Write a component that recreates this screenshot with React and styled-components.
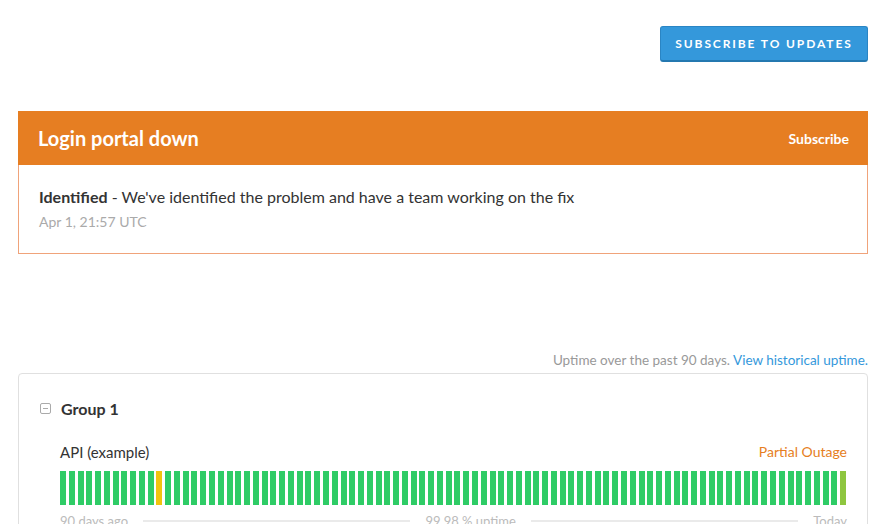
import React from 'react'
import styled, { createGlobalStyle } from 'styled-components'

const GlobalStyle = createGlobalStyle`
  body {
    margin: 0;
    background: #fff;
    font-family: Lato, "Open Sans", sans-serif;
    color: #333;
  }
`

const Page = styled.div`
  width: 850px;
  margin: 0 auto;
  padding: 26px 0 0;
  box-sizing: border-box;
`

const TopBar = styled.div`
  display: flex;
  justify-content: flex-end;
`

const SubscribeButton = styled.button`
  width: 208px;
  height: 36px;
  background: #3498db;
  border: 1px solid #2a85c4;
  border-bottom: 2px solid #2478b0;
  border-radius: 3px;
  color: #fff;
  font-family: Lato, sans-serif;
  font-weight: 700;
  font-size: 12px;
  letter-spacing: 1.9px;
  text-transform: uppercase;
`

const Incident = styled.div`
  margin-top: 49px;
  border: 1px solid #f0a37a;
  border-top: none;
`

const IncidentHead = styled.div`
  background: #e67e22;
  height: 54px;
  display: flex;
  align-items: center;
  justify-content: space-between;
  padding: 0 19px 0 20px;
  color: #fff;
  margin: 0 -1px;
`

const IncidentTitle = styled.h2`
  margin: 0;
  font-size: 20px;
  font-weight: 700;
`

const HeadLink = styled.span`
  font-size: 14px;
  font-weight: 700;
`

const IncidentBody = styled.div`
  padding: 22px 20px 0;
  height: 88px;
  box-sizing: border-box;
`

const Update = styled.div`
  font-size: 16px;
  color: #333;
  b { font-weight: 700; }
`

const Stamp = styled.div`
  margin-top: 7px;
  font-size: 14px;
  color: #aaa;
`

const UptimeNote = styled.div`
  margin-top: 98px;
  text-align: right;
  font-size: 13.5px;
  color: #999;
  a { color: #3498db; text-decoration: none; }
`

const Card = styled.div`
  margin-top: 5px;
  border: 1px solid #e0e0e0;
  border-radius: 4px;
  padding: 25px 20px 0 21px;
  height: 160px;
  box-sizing: border-box;
  overflow: hidden;
`

const GroupRow = styled.div`
  display: flex;
  align-items: center;
  gap: 10px;
  font-size: 16px;
  font-weight: 700;
  color: #333;
`

const Toggle = styled.span`
  width: 9px;
  height: 9px;
  border: 1px solid #aaa;
  border-radius: 2px;
  position: relative;
  &::after {
    content: '';
    position: absolute;
    left: 2px;
    right: 2px;
    top: 4px;
    height: 1px;
    background: #aaa;
  }
`

const Component = styled.div`
  padding: 0 0 0 20px;
  margin-top: 25px;
`

const ComponentRow = styled.div`
  display: flex;
  justify-content: space-between;
  font-size: 15px;
`

const Status = styled.span`
  color: #e67e22;
  font-size: 14px;
`

const Bars = styled.div`
  margin-top: 10px;
  display: flex;
  justify-content: space-between;
  height: 34px;
`

const Bar = styled.div`
  width: 6px;
  height: 100%;
  background: ${p => p.$c};
`

const Legend = styled.div`
  display: flex;
  align-items: center;
  gap: 15px;
  margin-top: 8px;
  font-size: 13px;
  color: #bbb;
`

const Rule = styled.div`
  flex: 1;
  height: 2px;
  background: #eaeaea;
`

const colors = Array.from({ length: 90 }, (_, i) =>
  i === 11 ? '#f1c40f' : i === 89 ? '#8ec63f' : '#2fcc66'
)

export default function App() {
  return (
    <>
      <GlobalStyle />
      <Page>
        <TopBar>
          <SubscribeButton>Subscribe to updates</SubscribeButton>
        </TopBar>
        <Incident>
          <IncidentHead>
            <IncidentTitle>Login portal down</IncidentTitle>
            <HeadLink>Subscribe</HeadLink>
          </IncidentHead>
          <IncidentBody>
            <Update><b>Identified</b> - We've identified the problem and have a team working on the fix</Update>
            <Stamp>Apr 1, 21:57 UTC</Stamp>
          </IncidentBody>
        </Incident>
        <UptimeNote>
          Uptime over the past 90 days. <a href="#">View historical uptime.</a>
        </UptimeNote>
        <Card>
          <GroupRow><Toggle />Group 1</GroupRow>
          <Component>
            <ComponentRow>
              <span>API (example)</span>
              <Status>Partial Outage</Status>
            </ComponentRow>
            <Bars>
              {colors.map((c, i) => <Bar key={i} $c={c} />)}
            </Bars>
            <Legend>
              <span>90 days ago</span>
              <Rule />
              <span>99.98 % uptime</span>
              <Rule />
              <span>Today</span>
            </Legend>
          </Component>
        </Card>
      </Page>
    </>
  )
}
